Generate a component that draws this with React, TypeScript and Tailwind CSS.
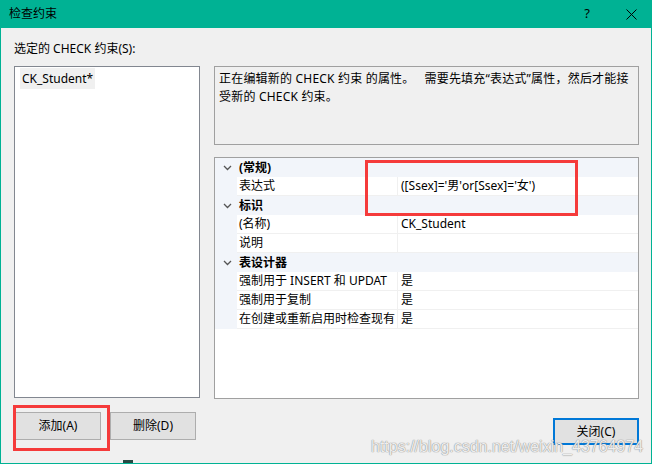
import React from 'react';

type Row =
  | { kind: 'cat'; label: string }
  | { kind: 'prop'; name: string; value: string };

const rows: Row[] = [
  { kind: 'cat', label: '(常规)' },
  { kind: 'prop', name: '表达式', value: "([Ssex]='男'or[Ssex]='女')" },
  { kind: 'cat', label: '标识' },
  { kind: 'prop', name: '(名称)', value: 'CK_Student' },
  { kind: 'prop', name: '说明', value: '' },
  { kind: 'cat', label: '表设计器' },
  { kind: 'prop', name: '强制用于 INSERT 和 UPDAT', value: '是' },
  { kind: 'prop', name: '强制用于复制', value: '是' },
  { kind: 'prop', name: '在创建或重新启用时检查现有', value: '是' },
];

function Chevron() {
  return (
    <svg width="9" height="6" viewBox="0 0 9 6" className="text-[#555]">
      <path d="M1 1l3.5 3.5L8 1" fill="none" stroke="currentColor" strokeWidth="1.3" />
    </svg>
  );
}

function PropertyGrid() {
  return (
    <div className="relative h-[242px] border border-[#a0a0a0] bg-white">
      {rows.map((r, i) =>
        r.kind === 'cat' ? (
          <div key={i} className="flex h-[19px] bg-[#f2f5fa]">
            <div className="flex w-[22px] items-center justify-center pl-[2px]">
              <Chevron />
            </div>
            <div className="pl-[2px] font-bold leading-[19px]">{r.label}</div>
          </div>
        ) : (
          <div key={i} className="flex h-[19px]">
            <div className="w-[22px] bg-[#f2f5fa]" />
            <div className="w-[160px] overflow-hidden whitespace-nowrap border-b border-[#f0f0f0] pl-[2px] leading-[18px]">
              {r.name}
            </div>
            <div className="flex-1 overflow-hidden whitespace-nowrap border-b border-l border-[#f0f0f0] pl-[3px] leading-[18px]">
              {r.value}
            </div>
          </div>
        )
      )}
      <div className="absolute left-[150px] top-[2px] h-[56px] w-[213px] border-[3px] border-[#f53b3b]" />
    </div>
  );
}

export default function App() {
  return (
    <div className="relative flex h-[464px] w-[652px] flex-col overflow-hidden border-x border-b border-[#00b294] bg-[#f0f0f0] font-['Noto_Sans','Noto_Sans_CJK_SC',sans-serif] text-[12px] text-black">
      {/* title bar */}
      <div className="flex h-[28px] shrink-0 items-center bg-[#00b294] pl-[8px] pr-[14px]">
        <span className="text-[12px]">检查约束</span>
        <span className="ml-auto mr-[36px] text-[13px]">?</span>
        <svg width="11" height="11" viewBox="0 0 11 11">
          <path d="M0.5 0.5l10 10M10.5 0.5l-10 10" stroke="#000" strokeWidth="1" />
        </svg>
      </div>

      <div className="flex flex-1 pl-[13px]">
        {/* left column */}
        <div className="flex w-[186px] flex-col">
          <div className="h-[38px] pt-[14px] leading-[14px]">选定的 CHECK 约束(S):</div>
          <div className="h-[332px] border border-[#828790] bg-white pl-[5px] pt-[1px]">
            <div className="inline-block h-[21px] bg-[#f0f0f0] px-[2px] leading-[21px]">CK_Student*</div>
          </div>
          <div className="relative mt-[14px] flex gap-[9px] pl-[1px]">
            <button className="h-[28px] w-[86px] border border-[#adadad] bg-[#e1e1e1]">添加(A)</button>
            <button className="h-[28px] w-[86px] border border-[#adadad] bg-[#e1e1e1]">删除(D)</button>
            <div className="absolute left-[-1px] top-[-7px] h-[46px] w-[97px] border-[3px] border-[#f53b3b]" />
          </div>
        </div>

        {/* right column */}
        <div className="ml-[14px] flex w-[425px] flex-col">
          <div className="h-[38px]" />
          <div className="h-[79px] border border-[#a0a0a0] px-[4px] pt-[3px] leading-[18px] tracking-[0.2px]">
            正在编辑新的 CHECK 约束 的属性。&nbsp;&nbsp; 需要先填充“表达式”属性，然后才能接
            <br />
            受新的 CHECK 约束。
          </div>
          <div className="mt-[12px]">
            <PropertyGrid />
          </div>
          <div className="mt-[19px] flex justify-end">
            <button className="h-[27px] w-[86px] border-2 border-[#0078d7] bg-[#e1e1e1]">关闭(C)</button>
          </div>
        </div>
      </div>

      {/* watermark */}
      <div className="pointer-events-none absolute left-[370px] top-[435px] font-['Liberation_Sans',sans-serif] text-[16px] text-white/85 [text-shadow:0_0_1px_#888,0_0_1px_#888]">
        https://blog.csdn.net/weixin_43764974
      </div>
      <div className="absolute bottom-0 left-[122px] h-[3px] w-[10px] bg-[#274a44]" />
    </div>
  );
}
